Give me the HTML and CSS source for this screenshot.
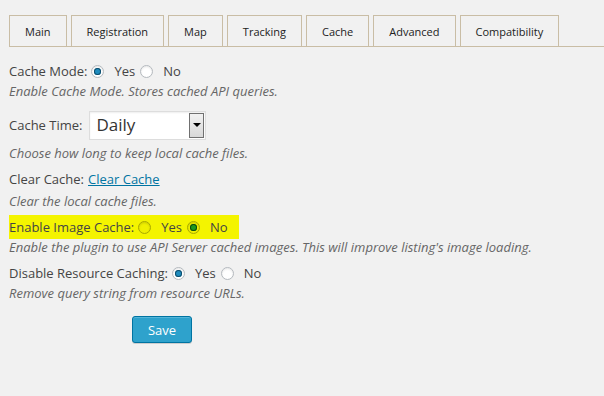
FILE: index.html
```html
<!DOCTYPE html>
<html lang="en">
<head>
    <meta charset="UTF-8">
    <title>Settings - Cache</title>
    <link rel="stylesheet" href="styles.css">
</head>
<body>
    <div class="wrap">
        <div class="nav-tabs">
            <a class="nav-tab">Main</a>
            <a class="nav-tab">Registration</a>
            <a class="nav-tab">Map</a>
            <a class="nav-tab">Tracking</a>
            <a class="nav-tab">Cache</a>
            <a class="nav-tab">Advanced</a>
            <a class="nav-tab">Compatibility</a>
        </div>

        <form class="settings">
            <div class="field">
                <div class="field-row">
                    <span class="label">Cache Mode:</span>
                    <input type="radio" name="cache_mode" checked><span class="opt">Yes</span>
                    <input type="radio" name="cache_mode"><span class="opt">No</span>
                </div>
                <div class="desc">Enable Cache Mode. Stores cached API queries.</div>
            </div>

            <div class="field field-select">
                <div class="field-row">
                    <span class="label">Cache Time:</span>
                    <div class="select">
                        <span class="select-value">Daily</span>
                        <span class="select-arrow"></span>
                    </div>
                </div>
                <div class="desc">Choose how long to keep local cache files.</div>
            </div>

            <div class="field field-clear">
                <div class="field-row">
                    <span class="label">Clear Cache:</span><a href="#" class="link">Clear Cache</a>
                </div>
                <div class="desc">Clear the local cache files.</div>
            </div>

            <div class="field">
                <div class="field-row">
                    <span class="highlight">
                        <span class="label">Enable Image Cache:</span>
                        <input type="radio" name="image_cache" class="tinted"><span class="opt">Yes</span>
                        <input type="radio" name="image_cache" class="tinted" checked><span class="opt">No</span>
                    </span>
                </div>
                <div class="desc">Enable the plugin to use API Server cached images. This will improve listing's image loading.</div>
            </div>

            <div class="field">
                <div class="field-row">
                    <span class="label">Disable Resource Caching:</span>
                    <input type="radio" name="resource_caching" checked><span class="opt">Yes</span>
                    <input type="radio" name="resource_caching"><span class="opt">No</span>
                </div>
                <div class="desc">Remove query string from resource URLs.</div>
            </div>

            <div class="actions">
                <button type="button" class="btn-primary">Save</button>
            </div>
        </form>
    </div>
</body>
</html>
```

FILE: styles.css
```css
* {
    margin: 0;
    padding: 0;
    box-sizing: border-box;
}

body {
    font-family: 'Open Sans', 'Liberation Sans', sans-serif;
    font-size: 13px;
    color: #444;
    background: #f1f1f1;
    min-height: 100vh;
}

.wrap {
    padding: 15px 0 0 9px;
}

.nav-tabs {
    display: flex;
    gap: 4px;
    border-bottom: 1px solid #c9bda5;
}

.nav-tab {
    display: block;
    border: 1px solid #c9bda5;
    border-bottom: none;
    padding: 0 15px;
    height: 31px;
    line-height: 31px;
    font-size: 11px;
    color: #222;
    text-decoration: none;
    background: #f1f1f1;
}

.settings {
    padding-top: 14px;
}

.field {
    margin-bottom: 5px;
}

.field-row {
    line-height: 20px;
    display: flex;
    align-items: center;
}

.label {
    margin-right: 4px;
}

.desc {
    font-style: italic;
    color: #666;
    line-height: 21px;
}

.opt {
    margin: 0 5px 0 10px;
}

input[type="radio"] {
    appearance: none;
    -webkit-appearance: none;
    width: 13px;
    height: 13px;
    border-radius: 50%;
    border: 1px solid #b4b9be;
    background: #fff;
    box-shadow: inset 0 1px 2px rgba(0,0,0,0.1);
    position: relative;
    flex: none;
}

input[type="radio"]:checked::before {
    content: "";
    position: absolute;
    left: 2px;
    top: 2px;
    width: 7px;
    height: 7px;
    border-radius: 50%;
    background: #1e8cbe;
    box-shadow: 0 0 0 1px #0f4c6a inset;
}

input[type="radio"].tinted {
    background: #f0f000;
    border-color: #a9a900;
    box-shadow: inset 0 1px 2px rgba(0,0,0,0.15);
}

input[type="radio"].tinted:checked::before {
    background: #1e9a1e;
    box-shadow: 0 0 0 1px #0a4a0a inset;
}

.field-select {
    margin-top: 8px;
    margin-bottom: 5px;
}

.field-select .field-row {
    height: 30px;
}

.field-select .desc {
    margin-top: 3px;
}

.select {
    display: flex;
    align-items: center;
    width: 117px;
    height: 29px;
    margin-left: 3px;
    border: 1px solid #ddd;
    background: #fff;
    box-shadow: inset 0 1px 2px rgba(0,0,0,0.07);
    padding: 1px;
}

.select-value {
    flex: 1;
    font-size: 17px;
    color: #333;
    padding-left: 5px;
}

.select-arrow {
    width: 15px;
    height: 25px;
    border: 1px solid #707070;
    background: linear-gradient(#f2f2f2, #d8d8d8);
    position: relative;
}

.select-arrow::after {
    content: "";
    position: absolute;
    left: 3px;
    top: 9px;
    border-left: 4px solid transparent;
    border-right: 4px solid transparent;
    border-top: 4px solid #000;
}

.link {
    color: #0074a2;
    text-decoration: underline;
}

.field-clear .desc {
    margin-top: 2px;
}

.highlight {
    background: #f4f400;
    display: flex;
    align-items: center;
    padding: 2px 6px 2px 0;
    margin: -2px 0 -2px 0;
}

.actions {
    padding: 7px 0 0 123px;
}

.btn-primary {
    font-family: inherit;
    font-size: 13px;
    color: #fff;
    background: #2ea2cc;
    border: 1px solid #0074a2;
    border-radius: 3px;
    box-shadow: inset 0 1px 0 rgba(120,200,230,0.5), 0 1px 0 rgba(0,0,0,0.15);
    width: 60px;
    height: 27px;
    line-height: 24px;
}
```
